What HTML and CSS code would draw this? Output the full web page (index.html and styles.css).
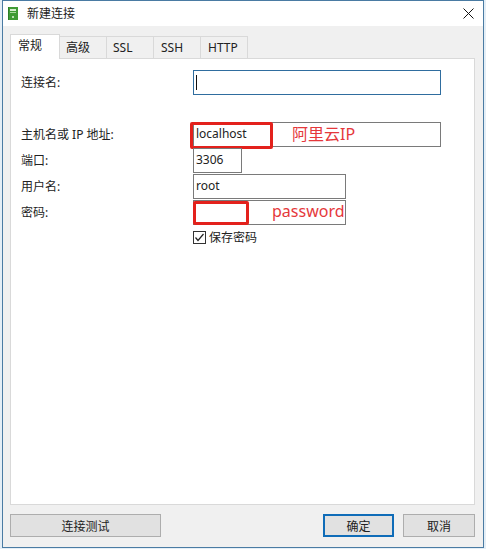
FILE: index.html
```html
<!DOCTYPE html>
<html lang="zh-CN">

<head>
    <meta charset="UTF-8">
    <meta name="viewport" content="width=device-width, initial-scale=1.0">
    <title>新建连接</title>
    <link rel="stylesheet" href="styles.css">
</head>

<body>
    <div class="window">
        <div class="titlebar">
            <svg class="app-icon" width="10" height="13" viewBox="0 0 10 13">
                <rect x="0" y="0" width="10" height="13" fill="#3f9a35" />
                <rect x="0" y="0" width="1" height="13" fill="#2c7d26" />
                <rect x="2" y="2" width="6" height="2" fill="#d6edd0" />
                <rect x="2" y="5" width="6" height="1" fill="#a9d8a0" />
                <circle cx="5" cy="10" r="1" fill="#e3f3df" />
            </svg>
            <span class="title">新建连接</span>
            <svg class="close" width="11" height="11" viewBox="0 0 11 11">
                <path d="M0.5 0.5L10.5 10.5M10.5 0.5L0.5 10.5" stroke="#111" stroke-width="1" fill="none" />
            </svg>
        </div>

        <div class="body">
            <ul class="tabs">
                <li class="tab active">常规</li>
                <li class="tab">高级</li>
                <li class="tab">SSL</li>
                <li class="tab">SSH</li>
                <li class="tab">HTTP</li>
            </ul>

            <div class="pane">
                <div class="row row-name">
                    <label>连接名:</label>
                    <div class="field field-focus"><span class="caret"></span></div>
                </div>

                <div class="group">
                    <div class="row">
                        <label>主机名或 IP 地址:</label>
                        <div class="field field-long">
                            localhost
                            <span class="mark mark-host"></span>
                            <span class="note note-host">阿里云IP</span>
                        </div>
                    </div>
                    <div class="row">
                        <label>端口:</label>
                        <div class="field field-short">3306</div>
                    </div>
                    <div class="row">
                        <label>用户名:</label>
                        <div class="field field-mid">root</div>
                    </div>
                    <div class="row">
                        <label>密码:</label>
                        <div class="field field-mid">
                            <span class="mark mark-pass"></span>
                            <span class="note note-pass">password</span>
                        </div>
                    </div>
                </div>

                <div class="save">
                    <svg class="check" width="13" height="13" viewBox="0 0 13 13">
                        <rect x="0.5" y="0.5" width="12" height="12" fill="#fff" stroke="#333" />
                        <path d="M2.5 6.5L5 9.5L10.5 3" stroke="#222" stroke-width="1.2" fill="none" />
                    </svg>
                    <span>保存密码</span>
                </div>
            </div>

            <div class="actions">
                <button class="btn btn-test">连接测试</button>
                <div class="actions-right">
                    <button class="btn btn-ok">确定</button>
                    <button class="btn btn-cancel">取消</button>
                </div>
            </div>
        </div>
    </div>
</body>

</html>
```

FILE: styles.css
```css
* {
    box-sizing: border-box;
}

body {
    margin: 0;
    width: 486px;
    height: 549px;
    overflow: hidden;
    background-color: #e4eef6;
    font-family: "Noto Sans", "Noto Sans CJK SC", sans-serif;
    font-size: 12px;
    color: #222;
}

.window {
    margin: 0 2px 1px 2px;
    height: 548px;
    border: 1px solid #4a7ba3;
    background-color: #f0f0f0;
    display: flex;
    flex-direction: column;
}

.titlebar {
    height: 25px;
    flex-shrink: 0;
    background-color: #fff;
    display: flex;
    align-items: center;
    padding-left: 5px;
    padding-right: 9px;
}

.app-icon {
    margin-right: 9px;
}

.title {
    flex: 1;
    margin-top: -2px;
}

.body {
    flex: 1;
    display: flex;
    flex-direction: column;
    padding: 8px 8px 9px 7px;
}

.tabs {
    display: flex;
    align-items: flex-end;
    height: 24px;
    margin: 0;
    padding: 0;
    list-style-type: none;
}

.tab {
    width: 47px;
    height: 22px;
    padding-left: 6px;
    border: 1px solid #d9d9d9;
    border-bottom: none;
    border-left: none;
    background-color: #f0f0f0;
    line-height: 22px;
}

.tab:nth-child(4) {
    padding-left: 7px;
}

.tab:nth-child(5) {
    padding-left: 7px;
}

.tab.active {
    width: 50px;
    height: 25px;
    padding-left: 7px;
    margin-bottom: -1px;
    background-color: #fff;
    border-left: 1px solid #d9d9d9;
    line-height: 22px;
    position: relative;
    z-index: 1;
}

.pane {
    height: 447px;
    border: 1px solid #d9d9d9;
    background-color: #fff;
    padding: 10px 0 0 10px;
}

.row {
    display: flex;
    align-items: center;
    height: 26px;
}

.row label {
    width: 172px;
    flex-shrink: 0;
}

.group {
    margin-top: 26px;
}

.field {
    position: relative;
    height: 25px;
    border: 1px solid #7a7a7a;
    padding-left: 2px;
    line-height: 22px;
}

.field-focus {
    width: 248px;
    border-color: #2f6d9f;
}

.field-long {
    width: 248px;
}

.field-short {
    width: 49px;
}

.field-mid {
    width: 153px;
}

.caret {
    display: block;
    width: 1px;
    height: 15px;
    margin-top: 4px;
    background-color: #111;
}

.mark {
    position: absolute;
    border: 3px solid #e3211c;
    border-radius: 2px;
}

.mark-host {
    left: -4px;
    top: -1px;
    width: 83px;
    height: 27px;
}

.mark-pass {
    left: -1px;
    top: 0;
    width: 56px;
    height: 24px;
}

.note {
    position: absolute;
    color: #e5383b;
    font-size: 16px;
    line-height: 20px;
}

.note-host {
    left: 98px;
    top: 1px;
}

.note-pass {
    left: 78px;
    top: 0;
}

.save {
    display: flex;
    align-items: center;
    gap: 3px;
    margin-top: 4px;
    margin-left: 172px;
    height: 16px;
}

.actions {
    display: flex;
    justify-content: space-between;
    margin-top: 9px;
}

.actions-right {
    display: flex;
    gap: 9px;
}

.btn {
    width: 71px;
    height: 23px;
    padding: 0;
    border: 1px solid #adadad;
    background-color: #e1e1e1;
    font-family: inherit;
    font-size: 12px;
    color: #222;
}

.btn-test {
    width: 151px;
}

.btn-ok {
    border: 2px solid #0f6cb8;
}

.btn-cancel {
    width: 72px;
}
```
